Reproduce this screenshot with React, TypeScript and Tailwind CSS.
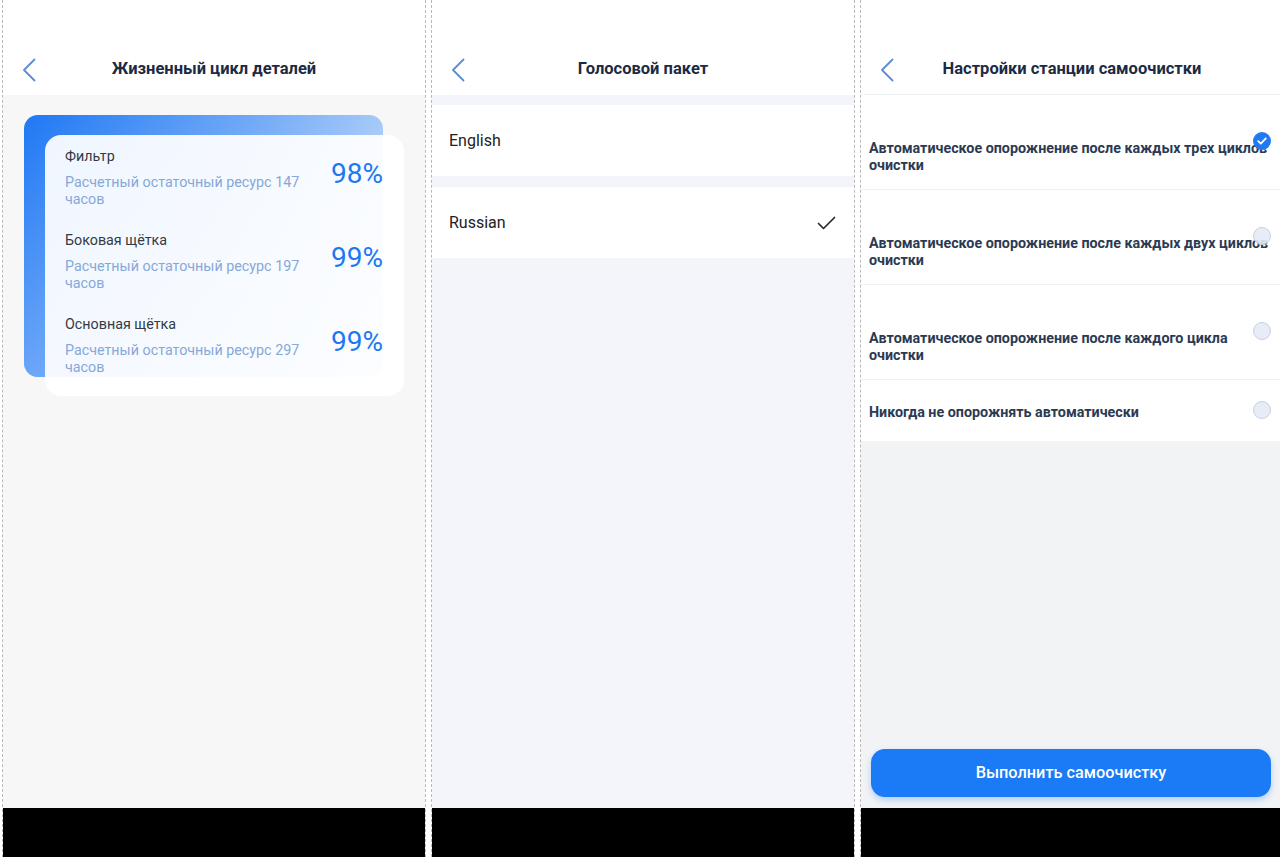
import React from "react";

const font = { fontFamily: "Roboto, 'Noto Sans', sans-serif" };

function BackArrow() {
  return (
    <svg width="14" height="24" viewBox="0 0 14 24" fill="none">
      <path
        d="M12.5 1.5 L2 12 L12.5 22.5"
        stroke="#5b8cd4"
        strokeWidth="1.8"
        strokeLinecap="round"
        strokeLinejoin="round"
      />
    </svg>
  );
}

function Header({ title, border }: { title: string; border?: boolean }) {
  return (
    <div
      className={`h-[95px] shrink-0 bg-white pt-[45px] ${border ? "border-b border-[#f0f1f3]" : ""}`}
    >
      <div className="grid h-[49px] grid-cols-[56px_1fr_56px] items-center">
        <div className="pl-[19px]">
          <BackArrow />
        </div>
        <div className="text-center text-[16.5px] font-bold text-[#1c2a44]">{title}</div>
        <div />
      </div>
    </div>
  );
}

function Panel({ children }: { children: React.ReactNode }) {
  return (
    <div className="flex h-[857px] w-[424px] shrink-0 flex-col border-x border-dashed border-[#b9b9b9]">
      {children}
      <div className="h-[49px] shrink-0 bg-black" />
    </div>
  );
}

const parts = [
  { name: "Фильтр", hours: 147, pct: 98 },
  { name: "Боковая щётка", hours: 197, pct: 99 },
  { name: "Основная щётка", hours: 297, pct: 99 },
];

function LifecyclePanel() {
  return (
    <Panel>
      <Header title="Жизненный цикл деталей" />
      <div className="flex-1 bg-[#f7f7f7] pt-[20px]">
        <div className="relative ml-[21px] w-[380px] pl-[21px] pt-[20px]">
          <div className="absolute left-0 top-0 h-[262px] w-[359px] rounded-[14px] bg-[linear-gradient(100deg,#1f78f4_0%,#6ea8f6_55%,#b9d4fa_100%)]">
            <div className="h-full w-full rounded-[14px] bg-[linear-gradient(180deg,rgba(255,255,255,0)_0%,rgba(255,255,255,0.28)_100%)]" />
          </div>
          <div className="relative flex w-[359px] flex-col gap-[22px] rounded-[16px] bg-white/[0.93] pb-[20px] pl-[20px] pr-[21px] pt-[11px]">
            {parts.map((p) => (
              <div key={p.name} className="flex items-center justify-between">
                <div className="w-[245px]">
                  <div className="text-[14.3px] leading-[20px] text-[#333a44]">{p.name}</div>
                  <div className="mt-[8px] text-[14.3px] leading-[17px] text-[#86a8d9]">
                    Расчетный остаточный ресурс {p.hours} часов
                  </div>
                </div>
                <div className="mb-[6px] text-[28px] leading-none text-[#1b78f3]">{p.pct}%</div>
              </div>
            ))}
          </div>
        </div>
      </div>
    </Panel>
  );
}

function VoicePanel() {
  const langs = [
    { name: "English", active: false },
    { name: "Russian", active: true },
  ];
  return (
    <Panel>
      <Header title="Голосовой пакет" />
      <div className="flex flex-1 flex-col gap-[11px] bg-[#f4f5fa] pt-[10px]">
        {langs.map((l) => (
          <div
            key={l.name}
            className="flex h-[71px] items-center justify-between bg-white pl-[17px] pr-[18px] text-[16px] text-[#222]"
          >
            <span>{l.name}</span>
            {l.active && (
              <svg width="19" height="14" viewBox="0 0 19 14" fill="none">
                <path
                  d="M1.5 7.5 L6.5 12.5 L17.5 1.5"
                  stroke="#2b2b2b"
                  strokeWidth="1.7"
                  strokeLinecap="round"
                  strokeLinejoin="round"
                />
              </svg>
            )}
          </div>
        ))}
      </div>
    </Panel>
  );
}

function Radio({ checked }: { checked: boolean }) {
  if (checked) {
    return (
      <div className="flex h-[18px] w-[18px] items-center justify-center rounded-full bg-[#1f7af5]">
        <svg width="10" height="8" viewBox="0 0 10 8" fill="none">
          <path
            d="M1.2 4.2 L3.8 6.6 L8.8 1.4"
            stroke="white"
            strokeWidth="1.8"
            strokeLinecap="round"
            strokeLinejoin="round"
          />
        </svg>
      </div>
    );
  }
  return <div className="h-[18px] w-[18px] rounded-full border border-[#c6d1e5] bg-[#e4eaf5]/90" />;
}

const options = [
  { text: "Автоматическое опорожнение после каждых трех циклов очистки", checked: true },
  { text: "Автоматическое опорожнение после каждых двух циклов очистки", checked: false },
  { text: "Автоматическое опорожнение после каждого цикла очистки", checked: false },
];

function StationPanel() {
  return (
    <Panel>
      <Header title="Настройки станции самоочистки" border />
      <div className="bg-white">
        {options.map((o) => (
          <div key={o.text} className="relative h-[95px] border-b border-[#f0f1f3] pl-[8px] pt-[45px]">
            <div className="w-[410px] text-[14.3px] font-bold leading-[17px] text-[#2b3a53]">{o.text}</div>
            <div className="absolute left-[392px] top-[37px]">
              <Radio checked={o.checked} />
            </div>
          </div>
        ))}
        <div className="relative h-[61px] pl-[8px] pt-[24px]">
          <div className="w-[410px] text-[14.3px] font-bold leading-[17px] text-[#2b3a53]">
            Никогда не опорожнять автоматически
          </div>
          <div className="absolute left-[392px] top-[21px]">
            <Radio checked={false} />
          </div>
        </div>
      </div>
      <div className="flex flex-1 flex-col justify-end bg-[#f2f3f5] pb-[11px] pl-[10px]">
        <button className="h-[48px] w-[400px] rounded-[14px] bg-[#1b7af5] text-[16.3px] font-medium text-white shadow-[0_3px_6px_rgba(27,122,245,0.3)]">
          Выполнить самоочистку
        </button>
      </div>
    </Panel>
  );
}

export default function App() {
  return (
    <div className="flex h-[858px] w-[1280px] gap-[5px] overflow-hidden bg-white pl-[2px]" style={font}>
      <LifecyclePanel />
      <VoicePanel />
      <StationPanel />
    </div>
  );
}
